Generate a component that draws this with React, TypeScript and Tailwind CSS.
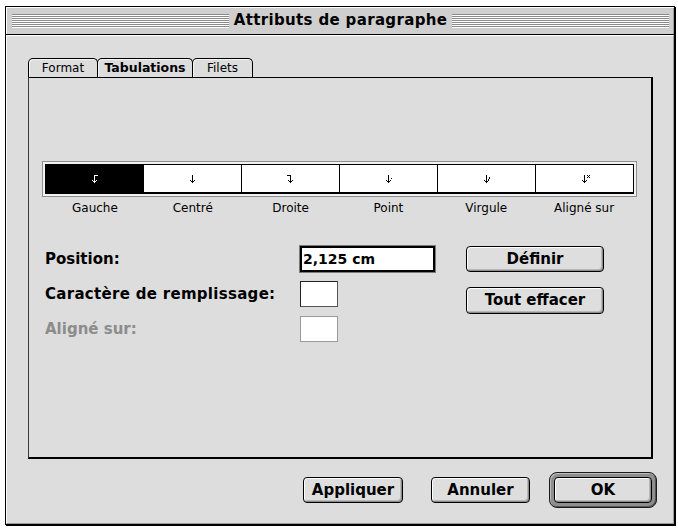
import React from "react";

const ui = { fontFamily: '"DejaVu Sans", "Liberation Sans", sans-serif' };

function Stripes() {
  return (
    <div className="flex-1 flex flex-col">
      {[0, 1, 2, 3, 4, 5, 6].map((i) => (
        <div key={i} className="h-[2px] border-t border-[#8a8a8a] bg-white" />
      ))}
    </div>
  );
}

type Kind = "left" | "center" | "right" | "point" | "comma" | "align";

function TabGlyph({ kind, color }: { kind: Kind; color: string }) {
  const px: [number, number, number, number][] = [
    [4, 1, 1, 8],
    [2, 6, 1, 1],
    [6, 6, 1, 1],
    [3, 7, 1, 1],
    [5, 7, 1, 1],
  ];
  if (kind === "left") px.push([4, 1, 4, 1]);
  if (kind === "right") px.push([1, 1, 4, 1]);
  if (kind === "point") px.push([7, 4, 1, 1]);
  if (kind === "comma") px.push([7, 3, 1, 2], [6, 5, 1, 1]);
  if (kind === "align") px.push([7, 1, 1, 1], [9, 1, 1, 1], [8, 2, 1, 1], [7, 3, 1, 1], [9, 3, 1, 1]);
  return (
    <svg width="10" height="10" viewBox="0 0 10 10" shapeRendering="crispEdges">
      {px.map(([x, y, w, h], i) => (
        <rect key={i} x={x} y={y} width={w} height={h} fill={color} />
      ))}
    </svg>
  );
}

function Button({ label, w, h = "h-[26px]" }: { label: string; w: string; h?: string }) {
  return (
    <div
      className={`${w} ${h} rounded-[4px] border border-black bg-[#dedede] shadow-[inset_1px_1px_0_#ffffff,inset_-1px_-1px_0_#8c8c8c,inset_-2px_-2px_0_#b8b8b8] flex items-center justify-center text-[15px] font-bold text-black`}
    >
      {label}
    </div>
  );
}

export default function App() {
  const cells: { kind: Kind; label: string }[] = [
    { kind: "left", label: "Gauche" },
    { kind: "center", label: "Centré" },
    { kind: "right", label: "Droite" },
    { kind: "point", label: "Point" },
    { kind: "comma", label: "Virgule" },
    { kind: "align", label: "Aligné sur" },
  ];

  return (
    <div className="w-[678px] h-[529px] bg-white pt-[6px] pl-[5px]" style={ui}>
      <div className="w-[670px] h-[519px] border border-black shadow-[1px_1px_0_#000] flex flex-col">
        {/* Title bar */}
        <div className="h-[28px] shrink-0 border-b border-black bg-[#cfcfcf] shadow-[inset_1px_1px_0_#ffffff,inset_-1px_0_0_#9a9a9a] flex items-center pl-[6px] pr-[5px] gap-[5px]">
          <Stripes />
          <div className="text-[15px] font-bold tracking-[0.35px] leading-none text-black">
            Attributs de paragraphe
          </div>
          <Stripes />
        </div>

        {/* Content */}
        <div className="flex-1 bg-[#dddddd] border-l border-t border-white border-r border-r-[#9a9a9a] border-b border-b-[#9a9a9a] flex flex-col">
          {/* Tabs */}
          <div className="mt-[22px] ml-[21px] flex h-[19px] text-[12px] text-black">
            <div className="w-[70px] h-[19px] border-t border-l border-r border-black rounded-t-[5px] shadow-[inset_1px_1px_0_#f4f4f4] flex items-center justify-center">
              Format
            </div>
            <div className="-ml-px w-[96px] h-[19px] border-t border-l border-r border-black rounded-t-[5px] shadow-[inset_1px_1px_0_#f4f4f4] flex items-center justify-center font-bold text-[12.5px]">
              Tabulations
            </div>
            <div className="-ml-px w-[61px] h-[19px] border-t border-l border-r border-black rounded-t-[5px] shadow-[inset_1px_1px_0_#f4f4f4] flex items-center justify-center">
              Filets
            </div>
          </div>

          {/* Panel */}
          <div className="ml-[21px] w-[625px] h-[382px] border-t border-l border-l-[#3a3a3a] border-black border-r-2 border-b-2 flex flex-col">
            {/* Tab kind bar */}
            <div className="mt-[83px] ml-[13px] w-[595px] h-[36px] border border-[#8f8f8f] bg-[#f2f2f2] p-[2px]">
              <div className="h-full border border-black border-b-2 flex">
                {cells.map((c, i) => (
                  <div
                    key={c.kind}
                    className={`flex-1 flex items-center justify-center ${i < 5 ? "border-r border-black" : ""} ${i === 0 ? "bg-black" : "bg-white"}`}
                  >
                    <TabGlyph kind={c.kind} color={i === 0 ? "#ffffff" : "#000000"} />
                  </div>
                ))}
              </div>
            </div>
            <div className="ml-[17px] mt-[3px] w-[587px] grid grid-cols-6 text-[12px] leading-[16px] text-center text-black">
              {cells.map((c) => (
                <div key={c.kind}>{c.label}</div>
              ))}
            </div>

            {/* Form */}
            <div className="mt-[29px] ml-[16px] flex">
              <div className="w-[391px] flex flex-col">
                <div className="flex items-center h-[28px]">
                  <div className="w-[254px] text-[15px] font-bold text-black">Position:</div>
                  <div className="w-[137px] h-[28px] border border-[#7a7a7a]">
                    <div className="h-full border-2 border-black bg-white flex items-center pl-[1px] text-[14px] font-bold text-black">
                      2,125 cm
                    </div>
                  </div>
                </div>
                <div className="flex items-center h-[26px] mt-[8px]">
                  <div className="w-[254px] text-[15px] font-bold text-black tracking-[0.3px]">
                    Caractère de remplissage:
                  </div>
                  <div className="ml-[1px] w-[38px] h-[26px] border border-[#222] border-r-[#555] border-b-[#555] bg-white" />
                </div>
                <div className="flex items-center h-[26px] mt-[9px]">
                  <div className="w-[254px] text-[15px] font-bold text-[#8c8c8c]">Aligné sur:</div>
                  <div className="ml-[1px] w-[38px] h-[26px] border border-[#9a9a9a] bg-white" />
                </div>
              </div>
              <div className="ml-[30px] flex flex-col">
                <div className="mt-[1px]">
                  <Button label="Définir" w="w-[138px]" />
                </div>
                <div className="mt-[15px]">
                  <Button label="Tout effacer" w="w-[138px]" h="h-[27px]" />
                </div>
              </div>
            </div>
          </div>

          {/* Bottom buttons */}
          <div className="mt-[13px] flex justify-end items-center pr-[16px]">
            <Button label="Appliquer" w="w-[100px]" />
            <div className="ml-[28px]">
              <Button label="Annuler" w="w-[99px]" />
            </div>
            <div className="ml-[19px] w-[108px] h-[36px] rounded-[8px] border border-[#1a1a1a] bg-[#8e8e8e] shadow-[inset_1px_1px_0_#bdbdbd,inset_-1px_-1px_0_#555] p-[4px]">
              <Button label="OK" w="w-full" />
            </div>
          </div>
        </div>
      </div>
    </div>
  );
}
